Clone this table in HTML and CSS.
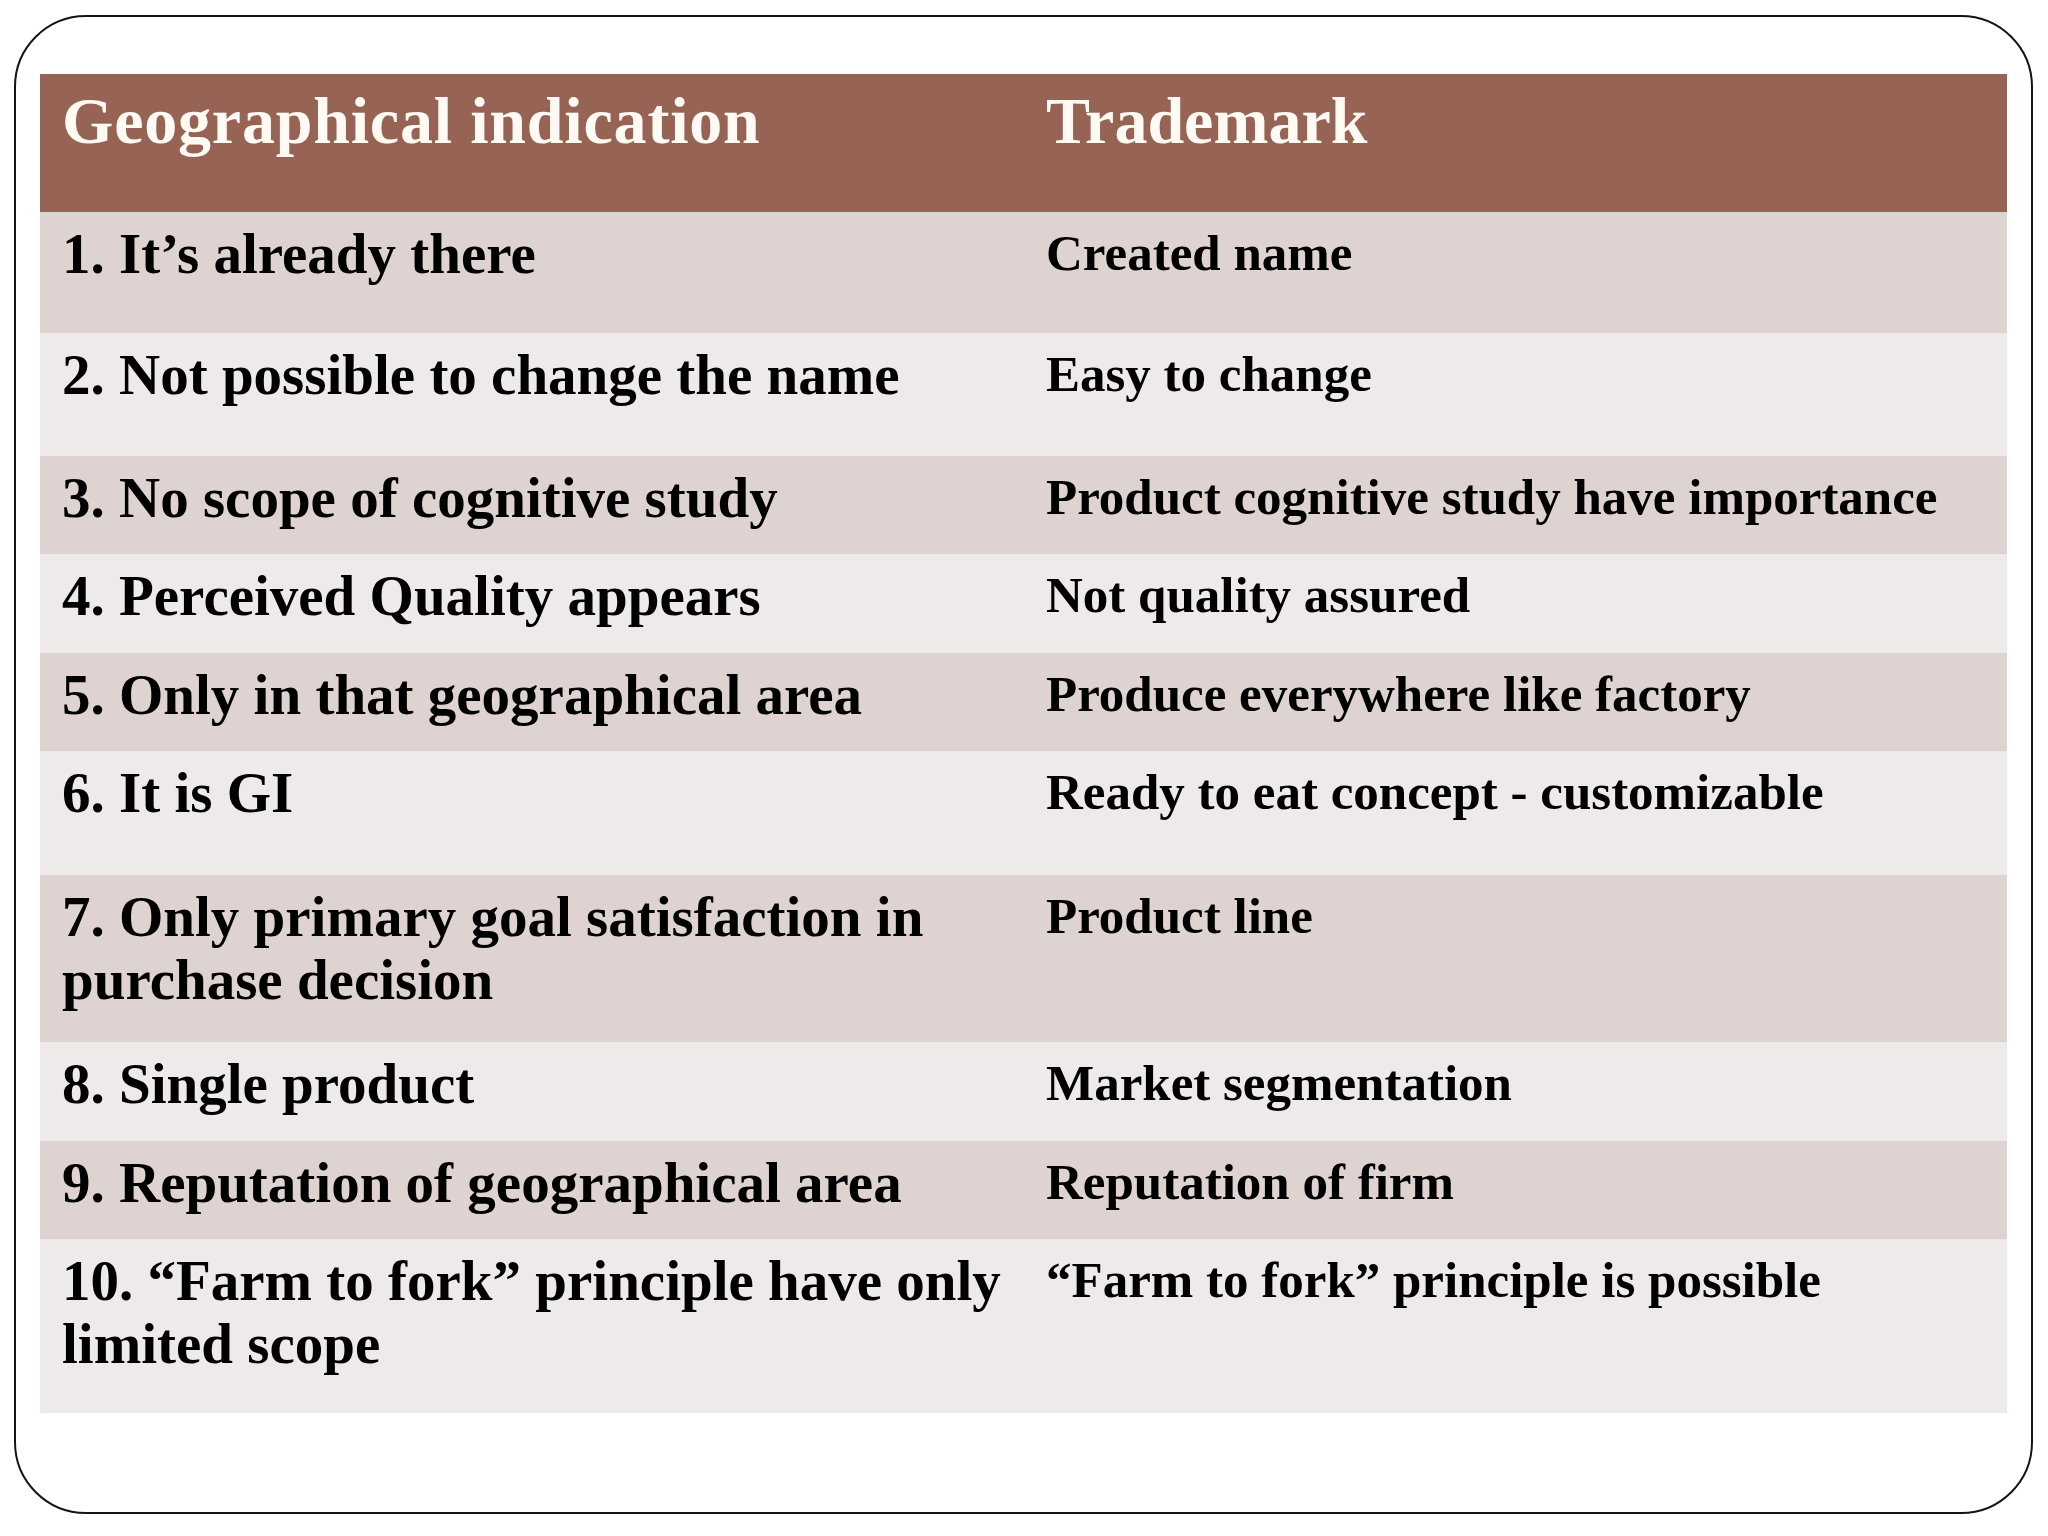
FILE: index.html
```html
<!DOCTYPE html>
<html lang="en">
<head>
<meta charset="utf-8">
<title>Geographical indication vs Trademark</title>
<link rel="stylesheet" href="styles.css">
</head>
<body>
<div class="slide">
  <div class="table">
    <div class="row head">
      <div class="cell left">Geographical indication</div>
      <div class="cell right">Trademark</div>
    </div>
    <div class="row odd">
      <div class="cell left">1. It’s already there</div>
      <div class="cell right">Created name</div>
    </div>
    <div class="row even">
      <div class="cell left">2. Not possible to change the name</div>
      <div class="cell right">Easy to change</div>
    </div>
    <div class="row odd">
      <div class="cell left">3. No scope of cognitive study</div>
      <div class="cell right">Product cognitive study have importance</div>
    </div>
    <div class="row even">
      <div class="cell left">4. Perceived Quality appears</div>
      <div class="cell right">Not quality assured</div>
    </div>
    <div class="row odd">
      <div class="cell left">5. Only in that geographical area</div>
      <div class="cell right">Produce everywhere like factory</div>
    </div>
    <div class="row even">
      <div class="cell left">6. It is GI</div>
      <div class="cell right">Ready to eat concept - customizable</div>
    </div>
    <div class="row odd">
      <div class="cell left">7. Only primary goal satisfaction in purchase decision</div>
      <div class="cell right">Product line</div>
    </div>
    <div class="row even">
      <div class="cell left">8. Single product</div>
      <div class="cell right">Market segmentation</div>
    </div>
    <div class="row odd">
      <div class="cell left">9. Reputation of geographical area</div>
      <div class="cell right">Reputation of firm</div>
    </div>
    <div class="row even">
      <div class="cell left">10. “Farm to fork” principle have only limited scope</div>
      <div class="cell right">“Farm to fork” principle is possible</div>
    </div>
  </div>
</div>
</body>
</html>
```

FILE: styles.css
```css
html, body {
  margin: 0;
  padding: 0;
  background: #ffffff;
}

body {
  font-family: "Liberation Serif", "Times New Roman", serif;
  color: #000;
}

.slide {
  box-sizing: border-box;
  margin: 15px 0 0 14px;
  width: 2019px;
  height: 1499px;
  border: 2px solid #141414;
  border-radius: 72px;
  padding: 57px 24px 0 24px;
  background: #fff;
}

.table {
  display: grid;
  grid-template-rows: 138px 121px 123px 98px 99px 98px 124px 167px 99px 98px 174px;
}

.row {
  display: grid;
  grid-template-columns: 984px 1fr;
}

.row.head {
  background: #966354;
  color: #fffaf3;
}

.row.odd {
  background: #dfd3d2;
}

.row.even {
  background: #efeaea;
}

.cell {
  font-weight: bold;
  line-height: 1.1;
}

.cell.left {
  font-size: 57px;
  padding: 11px 4px 0 22px;
}

.cell.right {
  font-size: 51px;
  padding: 13px 16px 0 22px;
}

.head .cell {
  font-size: 66px;
  line-height: 1.15;
  padding-top: 9px;
}

.head .cell.left {
  letter-spacing: 0.8px;
}
```
